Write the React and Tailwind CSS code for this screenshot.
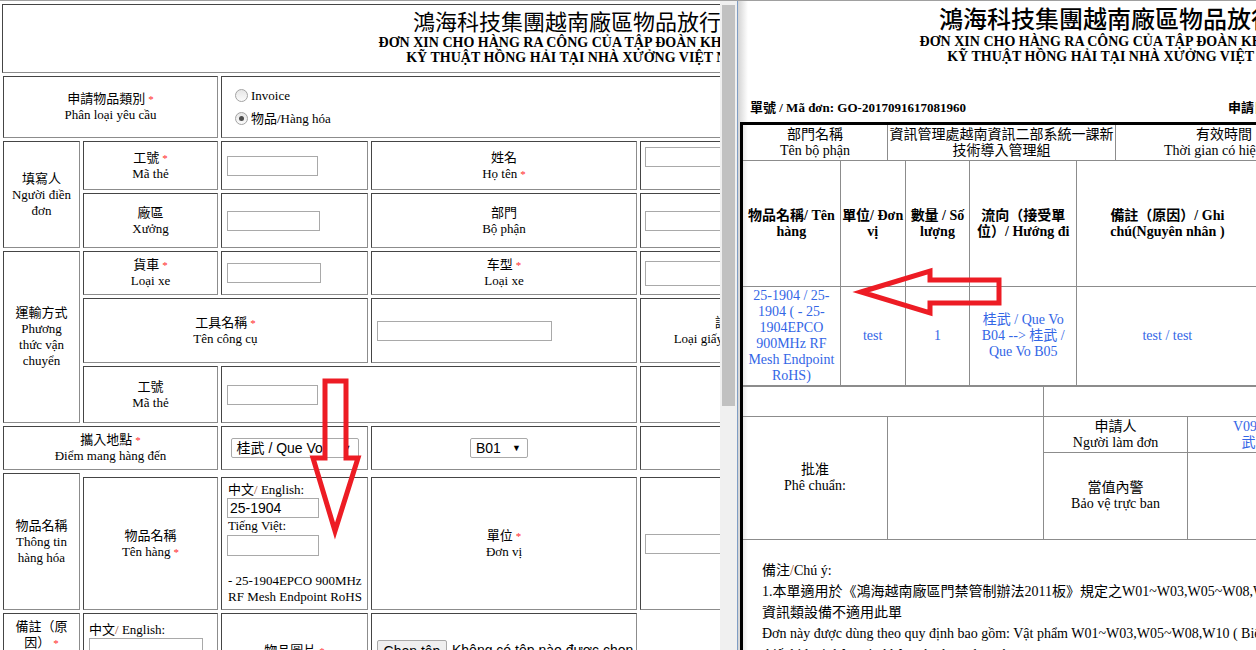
const cell = 'border border-t-[#454545] border-l-[#454545] border-r-[#8c8c8c] border-b-[#8c8c8c] bg-white'
const serif = "font-['Liberation_Serif','Noto_Sans_CJK_TC',serif]"
const sans = "font-['Liberation_Sans','Noto_Sans_CJK_TC',sans-serif]"
const rc = 'border-r border-b border-[#8c8c8c]'
const blue = 'text-[#3366e6]'

function Star() {
  return <span className="ml-[3px] text-[11px] text-[#ff2a2a]">*</span>
}

function Slash() {
  return <span className="text-[#9c4a1c]">/</span>
}

function Label({ zh, vi, zhStar, viStar, className = '' }) {
  return (
    <div className={`${cell} flex flex-col items-center justify-center px-[6px] text-center ${className}`}>
      <div>{zh}{zhStar && <Star />}</div>
      <div>{vi}{viStar && <Star />}</div>
    </div>
  )
}

function Field({ className = 'h-[20px] w-[91px]', value = '' }) {
  return (
    <input
      readOnly
      value={value}
      className={`${className} border border-[#a9a9a9] bg-white px-[2px] ${sans} text-[14px] leading-[18px] outline-none`}
    />
  )
}

function Select({ className, text }) {
  return (
    <div className={`${className} flex h-[20px] items-center justify-between rounded-[2px] border border-[#a9a9a9] bg-white pl-[5px] pr-[6px] ${sans} text-[14px] leading-[18px]`}>
      <span>{text}</span>
      <span className="text-[9px]">▼</span>
    </div>
  )
}

function Radio({ checked }) {
  return (
    <span className="flex h-[13px] w-[13px] items-center justify-center rounded-full border border-[#a3a3a3] bg-[linear-gradient(#e6e6e6,#fbfbfb)]">
      {checked && <span className="h-[5px] w-[5px] rounded-full bg-[#4d4d4d]" />}
    </span>
  )
}

function LeftPane() {
  return (
    <div className={`h-full w-[720px] shrink-0 overflow-hidden ${serif} text-[13px] leading-[16px]`}>
      <div className="w-[1160px] pl-[2px] pt-[3px]">
        <div className={`${cell} h-[69px] w-[1152px] pt-[2px] text-center`}>
          <div className="font-['Noto_Sans_CJK_TC',sans-serif] text-[22px] leading-[26px]">鴻海科技集團越南廠區物品放行單</div>
          <div className="mt-[2px] text-[14px] font-bold leading-[15px]">ĐƠN XIN CHO HÀNG RA CÔNG CỦA TẬP ĐOÀN KHOA HỌC</div>
          <div className="text-[14px] font-bold leading-[15px]">KỸ THUẬT HỒNG HẢI TẠI NHÀ XƯỞNG VIỆT NAM</div>
        </div>

        <div className="ml-[1px] mt-[3px] grid w-[1150px] grid-cols-[77px_135px_147px_266px_176px_334px] grid-rows-[62px_49px_55px_44px_65px_57px_44px_137px_92px] gap-[3px]">
          <Label className="col-span-2 col-start-1 row-start-1" zh="申請物品類別" zhStar vi="Phân loại yêu cầu" />
          <div className={`${cell} col-span-4 col-start-3 row-start-1 flex flex-col justify-center pl-[13px]`}>
            <div className="flex h-[23px] items-center gap-[3px]"><Radio /><span>Invoice</span></div>
            <div className="flex h-[23px] items-center gap-[3px]"><Radio checked /><span>物品/Hàng hóa</span></div>
          </div>

          <Label className="col-start-1 row-span-2 row-start-2" zh="填寫人" vi="Người điền đơn" />
          <Label className="col-start-2 row-start-2" zh="工號" zhStar vi="Mã thẻ" />
          <div className={`${cell} col-start-3 row-start-2 flex items-center pl-[5px]`}><Field /></div>
          <Label className="col-start-4 row-start-2" zh="姓名" vi="Họ tên" viStar />
          <div className={`${cell} col-span-2 col-start-5 row-start-2 pl-[4px] pt-[5px]`}><Field className="h-[20px] w-[160px]" /></div>
          <Label className="col-start-2 row-start-3" zh="廠區" vi="Xưởng" />
          <div className={`${cell} col-start-3 row-start-3 flex items-center pl-[5px]`}><Field className="h-[20px] w-[93px]" /></div>
          <Label className="col-start-4 row-start-3" zh="部門" vi="Bộ phận" />
          <div className={`${cell} col-span-2 col-start-5 row-start-3 flex items-center pl-[4px]`}><Field className="h-[20px] w-[160px]" /></div>

          <Label className="col-start-1 row-span-3 row-start-4" zh="運輸方式" vi="Phương thức vận chuyển" />
          <Label className="col-start-2 row-start-4" zh="貨車" zhStar vi="Loại xe" />
          <div className={`${cell} col-start-3 row-start-4 flex items-center pl-[5px]`}><Field className="h-[20px] w-[94px]" /></div>
          <Label className="col-start-4 row-start-4" zh="车型" zhStar vi="Loại xe" />
          <div className={`${cell} col-span-2 col-start-5 row-start-4 flex items-center pl-[4px]`}><Field className="h-[25px] w-[160px]" /></div>
          <Label className="col-span-2 col-start-2 row-start-5" zh="工具名稱" zhStar vi="Tên công cụ" />
          <div className={`${cell} col-start-4 row-start-5 flex items-center pl-[5px]`}><Field className="h-[20px] w-[175px]" /></div>
          <Label className="col-start-5 row-start-5" zh="證件" vi="Loại giấy tờ tùy thân" />
          <div className={`${cell} col-start-6 row-start-5 flex items-center pl-[5px]`}><Field className="h-[20px] w-[160px]" /></div>
          <Label className="col-start-2 row-start-6" zh="工號" vi="Mã thẻ" />
          <div className={`${cell} col-span-2 col-start-3 row-start-6 flex items-center pl-[5px]`}><Field /></div>
          <div className={`${cell} col-span-2 col-start-5 row-start-6`} />

          <Label className="col-span-2 col-start-1 row-start-7" zh="攜入地點" zhStar vi="Điểm mang hàng đến" />
          <div className={`${cell} col-start-3 row-start-7 flex items-center justify-center`}><Select className="w-[128px]" text="桂武 / Que Vo" /></div>
          <div className={`${cell} col-start-4 row-start-7 flex items-center justify-center pr-[10px]`}><Select className="w-[58px]" text="B01" /></div>
          <div className={`${cell} col-span-2 col-start-5 row-start-7`} />

          <Label className="col-start-1 row-start-8" zh="物品名稱" vi="Thông tin hàng hóa" />
          <Label className="col-start-2 row-start-8 mt-[4px]" zh="物品名稱" vi="Tên hàng" viStar />
          <div className={`${cell} col-start-3 row-start-8 mt-[4px] pl-[6px] pt-[4px]`}>
            <div>中文<Slash /> English:</div>
            <Field className="-ml-px block h-[20px] w-[92px]" value="25-1904" />
            <div>Tiếng Việt:</div>
            <Field className="-ml-px mt-px block h-[21px] w-[92px]" />
            <div className="mt-[17px] whitespace-nowrap">- 25-1904EPCO 900MHz</div>
            <div className="whitespace-nowrap">RF Mesh Endpoint RoHS</div>
          </div>
          <Label className="col-start-4 row-start-8 mt-[4px]" zh="單位" zhStar vi="Đơn vị" />
          <div className={`${cell} col-span-2 col-start-5 row-start-8 mt-[4px] flex items-center pl-[4px]`}><Field className="h-[20px] w-[160px]" /></div>

          <Label className="col-start-1 row-start-9" zh="備註（原因）" zhStar vi="Ghi chú (Nguyên nhân)" />
          <div className={`${cell} col-start-2 row-start-9 pl-[5px] pt-[8px]`}>
            <div>中文<Slash /> English:</div>
            <textarea readOnly className="block h-[44px] w-[114px] resize-none border border-[#a9a9a9] outline-none" />
          </div>
          <Label className="col-start-3 row-start-9" zh="物品圖片" zhStar vi="Hình ảnh vật phẩm" />
          <div className={`${cell} col-start-4 row-start-9 flex items-start gap-[5px] pl-[5px] pt-[26px] ${sans} text-[14px]`}>
            <span className="flex h-[21px] w-[70px] items-center justify-center rounded-[2px] border border-[#a9a9a9] bg-[#efefef]">Chọn tệp</span>
            <span className="whitespace-nowrap leading-[21px]">Không có tệp nào được chọn</span>
          </div>
        </div>
      </div>
    </div>
  )
}

function RightPane() {
  return (
    <div className={`h-full flex-1 overflow-hidden bg-[linear-gradient(to_right,#d4d4d4,#ffffff_10px)] pl-[2px] ${serif} text-[14px] leading-[16px]`}>
      <div className="w-[758px]">
        <div className="pt-[4px] text-center">
          <div className="font-['Noto_Sans_CJK_TC',sans-serif] text-[24px] font-medium leading-[26px]">鴻海科技集團越南廠區物品放行單</div>
          <div className="mt-[3px] text-[14px] font-bold leading-[15px]">ĐƠN XIN CHO HÀNG RA CÔNG CỦA TẬP ĐOÀN KHOA HỌC</div>
          <div className="text-[14px] font-bold leading-[15px]">KỸ THUẬT HỒNG HẢI TẠI NHÀ XƯỞNG VIỆT NAM</div>
        </div>
        <div className="mt-[36px] flex whitespace-nowrap text-[13px] font-bold leading-[16px]">
          <div className="w-[488px] pl-[10px]">單號 / Mã đơn: GO-2017091617081960</div>
          <div>申請日期 / Ngày làm đơn: 2017/09/16</div>
        </div>

        <div className="mt-[6px] border-l-[3px] border-t-[3px] border-black">
          <div className="flex h-[36px] text-center">
            <div className={`${rc} flex w-[145px] flex-col justify-center`}><div>部門名稱</div><div>Tên bộ phận</div></div>
            <div className={`${rc} flex w-[228px] flex-col justify-center whitespace-nowrap`}><div>資訊管理處越南資訊二部系統一課新</div><div>技術導入管理組</div></div>
            <div className={`${rc} flex w-[217px] flex-col justify-center whitespace-nowrap`}><div>有效時間</div><div>Thời gian có hiệu lực</div></div>
            <div className={`${rc} w-[165px]`} />
          </div>

          <div className="flex h-[126px] text-center font-bold">
            <div className={`${rc} flex w-[98px] items-center justify-center`}>物品名稱/ Tên hàng</div>
            <div className={`${rc} flex w-[65px] items-center justify-center`}>單位/ Đơn vị</div>
            <div className={`${rc} flex w-[65px] items-center justify-center`}>數量 / Số lượng</div>
            <div className={`${rc} flex w-[107px] items-center justify-center`}>流向（接受單位）/ Hướng đi</div>
            <div className={`${rc} flex w-[182px] items-center justify-center`}>備註（原因）/ Ghi chú(Nguyên nhân )</div>
            <div className={`${rc} w-[240px]`} />
          </div>

          <div className={`flex h-[100px] text-center ${blue}`}>
            <div className={`${rc} flex w-[98px] flex-col justify-center border-b-2 whitespace-nowrap`}>
              <div>25-1904 / 25-</div><div>1904 ( - 25-</div><div>1904EPCO</div><div>900MHz RF</div><div>Mesh Endpoint</div><div>RoHS)</div>
            </div>
            <div className={`${rc} flex w-[65px] items-center justify-center border-b-2`}>test</div>
            <div className={`${rc} flex w-[65px] items-center justify-center border-b-2`}>1</div>
            <div className={`${rc} flex w-[107px] flex-col justify-center border-b-2 whitespace-nowrap`}>
              <div>桂武 / Que Vo</div><div>B04 --&gt; 桂武 /</div><div>Que Vo B05</div>
            </div>
            <div className={`${rc} flex w-[182px] items-center justify-center border-b-2`}>test / test</div>
            <div className={`${rc} w-[240px] border-b-2`} />
          </div>

          <div className="flex h-[30px]">
            <div className={`${rc} w-[301px]`} />
            <div className={`${rc} w-[454px]`} />
          </div>

          <div className="flex h-[123px] text-center">
            <div className={`${rc} flex w-[145px] flex-col justify-center`}><div>批准</div><div>Phê chuẩn:</div></div>
            <div className={`${rc} w-[156px]`} />
            <div className="flex flex-col">
              <div className="flex h-[36px]">
                <div className={`${rc} flex w-[144px] flex-col justify-center`}><div>申請人</div><div>Người làm đơn</div></div>
                <div className={`${rc} flex w-[150px] flex-col justify-center whitespace-nowrap ${blue}`}><div>V0903568</div><div>武氏蓮</div></div>
                <div className={`${rc} w-[160px]`} />
              </div>
              <div className="flex h-[87px]">
                <div className={`${rc} flex w-[144px] flex-col justify-center`}><div>當值內警</div><div>Bảo vệ trực ban</div></div>
                <div className={`${rc} w-[150px]`} />
                <div className={`${rc} w-[160px]`} />
              </div>
            </div>
          </div>

          <div className="h-[120px] whitespace-nowrap pl-[19px] pt-[20px] leading-[21px]">
            <div>備注<Slash />Chú ý:</div>
            <div>1.本單適用於《鴻海越南廠區門禁管制辦法2011板》規定之W01~W03,W05~W08,W10物品，</div>
            <div>資訊類設備不適用此單</div>
            <div>Đơn này được dùng theo quy định bao gồm: Vật phẩm W01~W03,W05~W08,W10 ( Biểu mẫu 《Quy định quản lý ra vào cổng 2011》),</div>
            <div>thiết bị loại thông tin không áp dụng đơn này.</div>
          </div>
        </div>
      </div>
    </div>
  )
}

function Arrows() {
  return (
    <svg className="pointer-events-none absolute left-0 top-[-1px]" width="1256" height="650" viewBox="0 0 1256 650">
      <path d="M325 381 H346 V458 H358 L335 531 L313 458 H325 Z" fill="none" stroke="#ed1c24" strokeWidth="5" />
      <path d="M861 292 L930 271 V280 H999 V303 H930 V313 Z" fill="none" stroke="#ed1c24" strokeWidth="5" />
    </svg>
  )
}

export default function App() {
  return (
    <div className="relative flex h-[650px] w-[1256px] overflow-hidden border-t border-[#a0a0a0] bg-white text-black">
      <LeftPane />
      <div className="h-full w-[17px] shrink-0 bg-[#f0f0f0] pl-[2px] pt-[4px]">
        <div className="h-[401px] w-[13px] bg-[#c1c1c1]" />
      </div>
      <div className="h-full w-px shrink-0 bg-[#7f9dc4]" />
      <RightPane />
      <Arrows />
    </div>
  )
}
